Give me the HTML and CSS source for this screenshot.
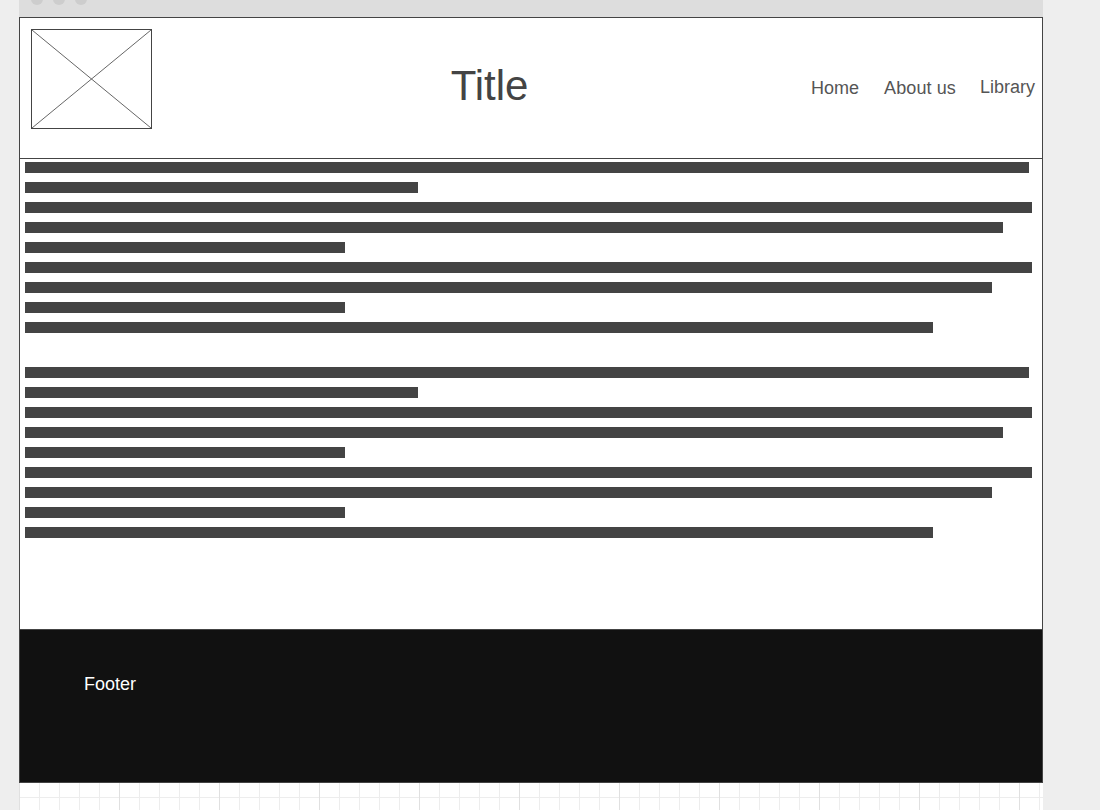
FILE: index.html
```html
<!DOCTYPE html>
<html>
<head>
<meta charset="utf-8">
<title>Wireframe</title>
<link rel="stylesheet" href="styles.css">
</head>
<body>
<div class="canvas">
  <div class="topbar">
    <span class="dot"></span><span class="dot"></span><span class="dot"></span>
  </div>
  <div class="frame">
    <header class="header">
      <svg class="logo" width="121" height="100" viewBox="0 0 121 100">
        <rect x="0.5" y="0.5" width="120" height="99" fill="#fff" stroke="#444" stroke-width="1"/>
        <line x1="1" y1="1" x2="120" y2="99" stroke="#555" stroke-width="0.9"/>
        <line x1="120" y1="1" x2="1" y2="99" stroke="#555" stroke-width="0.9"/>
      </svg>
      <div class="title">Title</div>
      <nav class="nav">
        <span class="nav-item">Home</span>
        <span class="nav-item nav-about">About us</span>
        <span class="nav-item nav-lib">Library</span>
      </nav>
    </header>
    <main class="content">
      <div class="para">
        <div class="bar" style="width:1004px"></div>
        <div class="bar" style="width:393px"></div>
        <div class="bar" style="width:1007px"></div>
        <div class="bar" style="width:978px"></div>
        <div class="bar" style="width:320px"></div>
        <div class="bar" style="width:1007px"></div>
        <div class="bar" style="width:967px"></div>
        <div class="bar" style="width:320px"></div>
        <div class="bar" style="width:908px"></div>
      </div>
      <div class="para">
        <div class="bar" style="width:1004px"></div>
        <div class="bar" style="width:393px"></div>
        <div class="bar" style="width:1007px"></div>
        <div class="bar" style="width:978px"></div>
        <div class="bar" style="width:320px"></div>
        <div class="bar" style="width:1007px"></div>
        <div class="bar" style="width:967px"></div>
        <div class="bar" style="width:320px"></div>
        <div class="bar" style="width:908px"></div>
      </div>
    </main>
    <footer class="footer">Footer</footer>
  </div>
</div>
</body>
</html>
```

FILE: styles.css
```css
html, body {
  margin: 0;
  padding: 0;
}
body {
  background: #eeeeee;
  overflow: hidden;
  font-family: "Liberation Sans", Arial, sans-serif;
}
.canvas {
  margin-left: 19px;
  width: 1024px;
  height: 810px;
  background-color: #ffffff;
  background-image:
    linear-gradient(to right, #e0e0e0 1px, transparent 1px),
    linear-gradient(to right, #ededed 1px, transparent 1px),
    linear-gradient(to bottom, #ededed 1px, transparent 1px);
  background-size: 100px 100px, 20px 20px, 20px 20px;
  background-position: 0 0, 0 0, 0 17px;
}
.topbar {
  height: 17px;
  background: #dddddd;
  display: flex;
  gap: 10px;
  padding-left: 12px;
  overflow: hidden;
}
.dot {
  width: 12px;
  height: 12px;
  border-radius: 50%;
  background: #cdcdcd;
  margin-top: -7px;
  flex: none;
}
.frame {
  border: 1px solid #444444;
  background: #ffffff;
}
.header {
  height: 140px;
  border-bottom: 1px solid #444444;
  display: flex;
  align-items: center;
}
.logo {
  display: block;
  align-self: flex-start;
  margin: 11px 0 0 11px;
  flex: none;
}
.title {
  flex: 1;
  text-align: center;
  padding-left: 16px;
  padding-bottom: 4px;
  font-size: 42px;
  color: #444444;
}
.nav {
  display: flex;
  align-items: center;
  padding-right: 7px;
}
.nav-item {
  font-size: 18px;
  color: #555555;
}
.nav-about {
  margin-left: 25px;
  letter-spacing: 0.1px;
}
.nav-lib {
  margin-left: 24px;
  padding-bottom: 2px;
}
.content {
  height: 470px;
  box-sizing: border-box;
  padding: 3px 0 0 5px;
}
.para {
  display: flex;
  flex-direction: column;
  gap: 9px;
  margin-bottom: 34px;
}
.bar {
  height: 11px;
  background: #444444;
}
.footer {
  border-top: 1px solid #444444;
  background: #111111;
  color: #ffffff;
  font-size: 18px;
  padding: 44px 0 0 64px;
  height: 108px;
}
```
